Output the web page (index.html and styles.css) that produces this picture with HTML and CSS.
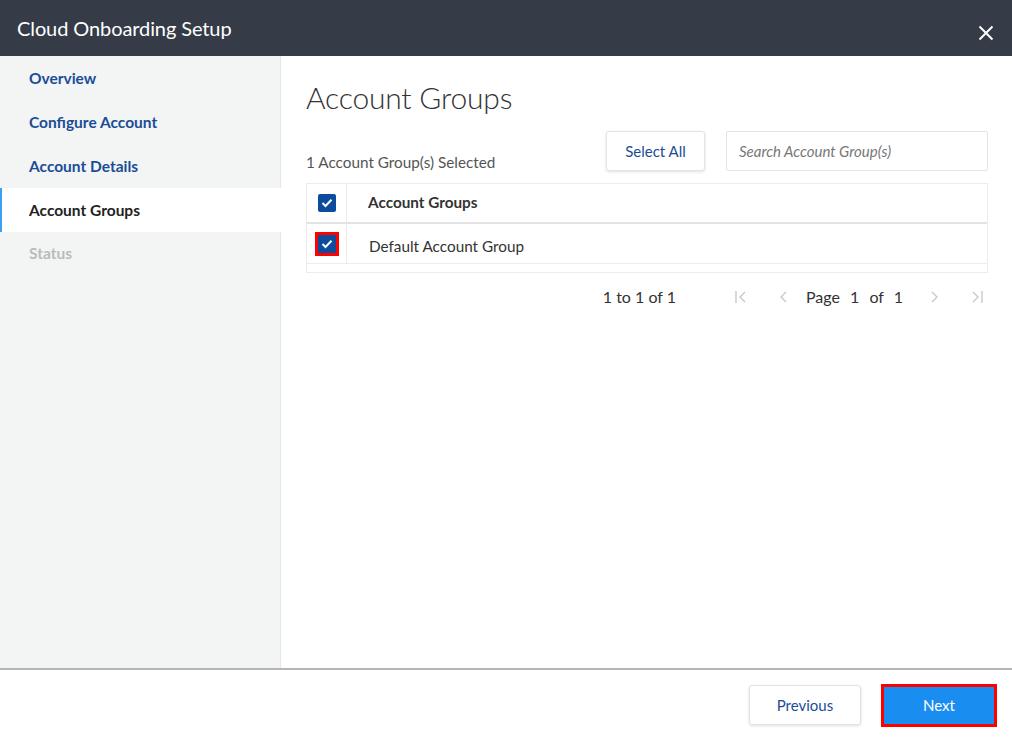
FILE: index.html
```html
<!DOCTYPE html>
<html>
<head>
<meta charset="utf-8">
<link rel="stylesheet" href="styles.css">
</head>
<body>
<div class="dialog">
  <header class="topbar">
    <h1 class="topbar-title">Cloud Onboarding Setup</h1>
    <button class="close-btn" aria-label="Close">
      <svg width="16" height="16" viewBox="0 0 16 16"><path d="M1.5 1.5 L14.5 14.5 M14.5 1.5 L1.5 14.5" stroke="#fff" stroke-width="2" fill="none"/></svg>
    </button>
  </header>
  <div class="body">
    <nav class="sidebar">
      <a class="nav-item">Overview</a>
      <a class="nav-item">Configure Account</a>
      <a class="nav-item">Account Details</a>
      <a class="nav-item active">Account Groups</a>
      <a class="nav-item disabled">Status</a>
    </nav>
    <main class="content">
      <h2 class="page-title">Account Groups</h2>
      <div class="toolbar">
        <span class="selected-count">1 Account Group(s) Selected</span>
        <div class="toolbar-actions">
          <button class="btn-select-all">Select All</button>
          <div class="search">Search Account Group(s)</div>
        </div>
      </div>
      <div class="grid">
        <div class="grid-row header-row">
          <div class="cell-check"><span class="checkbox"><svg width="12" height="10" viewBox="0 0 12 10"><path d="M1.5 5 L4.5 8 L10.5 1.8" stroke="#fff" stroke-width="2" fill="none"/></svg></span></div>
          <div class="cell-name">Account Groups</div>
        </div>
        <div class="grid-row data-row">
          <div class="cell-check"><span class="checkbox highlight"><svg width="12" height="10" viewBox="0 0 12 10"><path d="M1.5 5 L4.5 8 L10.5 1.8" stroke="#fff" stroke-width="2" fill="none"/></svg></span></div>
          <div class="cell-name">Default Account Group</div>
        </div>
        <div class="grid-spacer"></div>
      </div>
      <div class="pager">
        <span class="pager-summary">1 to 1 of 1</span>
        <span class="pager-icon first"><svg width="16" height="14" viewBox="0 0 16 14"><path d="M3 1 V13 M12 2 L7 7 L12 12" stroke="#c8c8c8" stroke-width="1.4" fill="none"/></svg></span>
        <span class="pager-icon prev"><svg width="16" height="14" viewBox="0 0 16 14"><path d="M10 2 L5 7 L10 12" stroke="#c8c8c8" stroke-width="1.4" fill="none"/></svg></span>
        <span class="pager-page">Page <b>1</b> of <b>1</b></span>
        <span class="pager-icon next"><svg width="16" height="14" viewBox="0 0 16 14"><path d="M6 2 L11 7 L6 12" stroke="#c8c8c8" stroke-width="1.4" fill="none"/></svg></span>
        <span class="pager-icon last"><svg width="16" height="14" viewBox="0 0 16 14"><path d="M4 2 L9 7 L4 12 M13 1 V13" stroke="#c8c8c8" stroke-width="1.4" fill="none"/></svg></span>
      </div>
    </main>
  </div>
  <footer class="footer">
    <button class="btn-prev">Previous</button>
    <button class="btn-next">Next</button>
  </footer>
</div>
</body>
</html>
```
FILE: styles.css
```css
* { box-sizing: border-box; }
html, body { margin: 0; padding: 0; }
body {
  font-family: Lato, "Open Sans", "Liberation Sans", sans-serif;
  background: #fff;
  color: #333;
}
.dialog {
  width: 1012px;
  height: 738px;
  display: flex;
  flex-direction: column;
}
.topbar {
  height: 56px;
  background: #353b47;
  display: flex;
  align-items: center;
  justify-content: space-between;
  padding: 0 18px 0 17px;
  flex: none;
}
.topbar-title {
  margin: 0;
  color: #fff;
  font-size: 20px;
  font-weight: 400;
  letter-spacing: -0.1px;
}
.close-btn {
  background: none;
  border: 0;
  padding: 0;
  margin-top: 10px;
  width: 16px;
  height: 16px;
  display: flex;
}
.body {
  flex: 1;
  display: flex;
  min-height: 0;
}
.sidebar {
  width: 281px;
  flex: none;
  background: #f3f4f4;
  border-right: 1px solid #e6e7e7;
  display: flex;
  flex-direction: column;
}
.nav-item {
  height: 44px;
  display: flex;
  align-items: center;
  padding-left: 29px;
  padding-bottom: 1px;
  font-size: 15.5px;
  font-weight: 700;
  color: #1b4d97;
}
.nav-item.active {
  background: #fff;
  color: #222;
  border-left: 2px solid #3aa1f5;
  padding-left: 27px;
  margin-right: -1px;
}
.nav-item.disabled { color: #bbb; padding-bottom: 2px; }
.content {
  flex: 1;
  padding: 22px 24px 0 25px;
}
.page-title {
  margin: 0;
  font-size: 30px;
  font-weight: 300;
  color: #333;
  line-height: 38px;
  letter-spacing: -0.2px;
}
.toolbar {
  margin-top: 15px;
  display: flex;
  align-items: flex-end;
  justify-content: space-between;
  height: 40px;
}
.selected-count {
  font-size: 15.3px;
  color: #555;
}
.toolbar-actions {
  display: flex;
  gap: 21px;
}
.btn-select-all {
  width: 99px;
  height: 40px;
  background: #fff;
  border: 1px solid #e4e4e4;
  border-radius: 3px;
  box-shadow: 0 1px 3px rgba(0,0,0,0.12);
  font-family: inherit;
  font-size: 15px;
  color: #1b4d97;
}
.search {
  width: 262px;
  height: 40px;
  border: 1px solid #e4e4e4;
  border-radius: 2px;
  padding: 0 12px;
  display: flex;
  align-items: center;
  font-size: 15px;
  font-style: italic;
  color: #777;
}
.grid {
  margin-top: 12px;
  border: 1px solid #ececec;
}
.grid-row {
  display: flex;
  height: 40px;
}
.header-row { border-bottom: 2px solid #e3e3e3; }
.data-row { border-bottom: 1px solid #ececec; }
.cell-check {
  width: 40px;
  flex: none;
  border-right: 1px solid #ececec;
  display: flex;
  align-items: center;
  justify-content: center;
}
.cell-name {
  display: flex;
  align-items: center;
  padding-left: 21px;
  font-size: 15.3px;
}
.header-row .cell-name { font-weight: 700; color: #333; padding-bottom: 3px; }
.data-row .cell-name { padding-left: 22px; color: #333; padding-top: 5px; }
.checkbox {
  width: 18px;
  height: 18px;
  background: #0d4c9c;
  border-radius: 2px;
  display: flex;
  align-items: center;
  justify-content: center;
}
.header-row .checkbox { margin-top: -1px; }
.checkbox.highlight {
  outline: 3px solid #f00;
  border-radius: 0;
}
.grid-spacer { height: 8px; }
.pager {
  margin-top: 14px;
  display: flex;
  align-items: center;
  justify-content: flex-end;
  font-size: 16px;
  color: #333;
  padding-right: 3px;
}
.pager-icon {
  display: flex;
  width: 16px;
}
.pager-icon.first { margin-left: 57px; }
.pager-icon.prev { margin-left: 27px; }
.pager-page {
  margin: 0 23px 0 14px;
  word-spacing: 6px;
}
.pager-page b { font-weight: 400; }
.pager-icon.last { margin-left: 27px; }
.footer {
  height: 70px;
  flex: none;
  border-top: 2px solid #b5b5b5;
  display: flex;
  align-items: center;
  justify-content: flex-end;
  gap: 20px;
  padding: 2px 15px 0 0;
}
.btn-prev {
  width: 112px;
  height: 40px;
  background: #fff;
  border: 1px solid #e2e2e2;
  border-radius: 3px;
  box-shadow: 0 1px 3px rgba(0,0,0,0.12);
  font-family: inherit;
  font-size: 15px;
  color: #1b4d97;
}
.btn-next {
  width: 116px;
  height: 43px;
  background: #1a8ef0;
  border: 3px solid #f00;
  font-family: inherit;
  font-size: 15px;
  color: #fff;
}
```
